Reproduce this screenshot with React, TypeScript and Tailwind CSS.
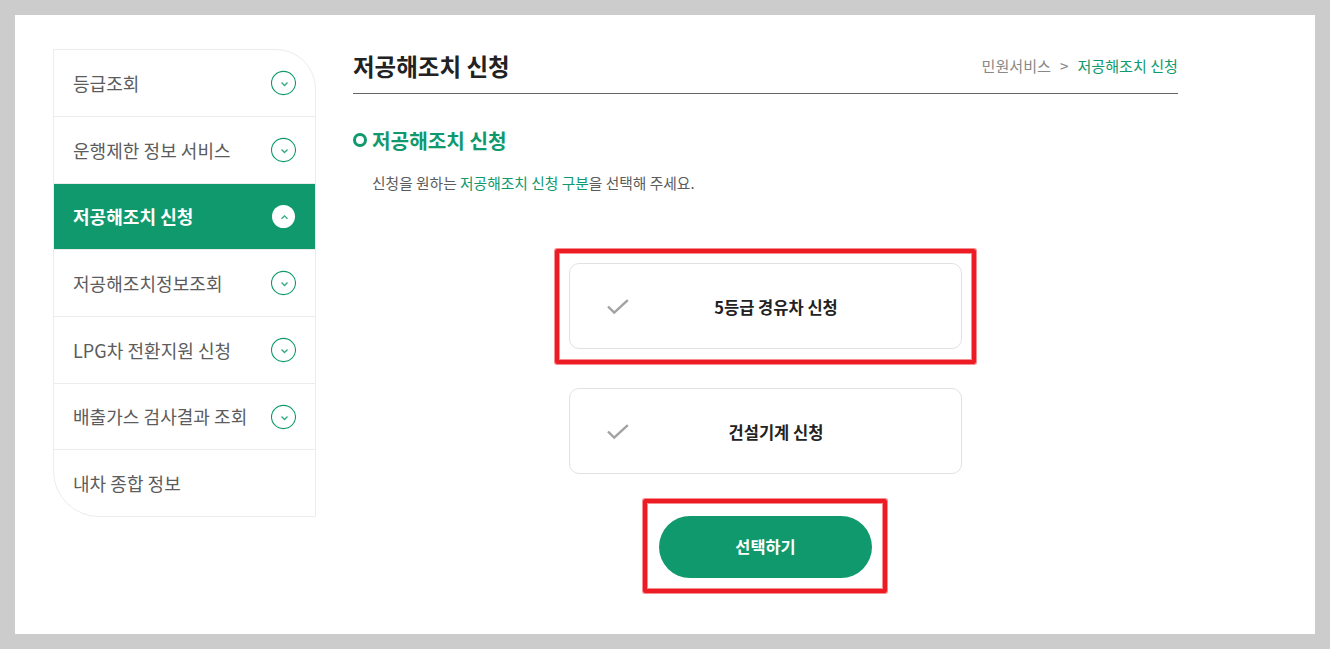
import { useState } from "react"

const menus = [
  { label: "등급조회", height: "h-[67px]", hasChildren: true },
  { label: "운행제한 정보 서비스", height: "h-[67px]", hasChildren: true },
  { label: "저공해조치 신청", height: "h-[66px]", hasChildren: true },
  { label: "저공해조치정보조회", height: "h-[67px]", hasChildren: true },
  { label: "LPG차 전환지원 신청", height: "h-[67px]", hasChildren: true },
  { label: "배출가스 검사결과 조회", height: "h-[66px]", hasChildren: true },
  { label: "내차 종합 정보", height: "h-[66px]", hasChildren: false }
]

const activeMenu = "저공해조치 신청"

function ToggleIcon({ open }: { open: boolean }) {
  return (
    <svg width="26" height="26" viewBox="0 0 26 26" fill="none" className="shrink-0">
      {open
        ? <circle cx="13.5" cy="12.5" r="11.5" fill="#fff" />
        : <ellipse cx="13.5" cy="13" rx="12" ry="11.6" stroke="#0f996d" strokeWidth="1.1" />
      }
      <path
        d={open ? "M11.5 14.8 L14.5 11.8 L17.5 14.8" : "M11.5 12.5 L14.5 15.5 L17.5 12.5"}
        stroke="#0f996d"
        strokeOpacity="0.85"
        strokeWidth="1.3"
      />
    </svg>
  )
}

function SideMenu() {
  return (
    <nav className="w-[263px] h-[468px] shrink-0 overflow-hidden rounded-tr-[40px] rounded-bl-[46px] border border-[#ececec]">
      <ul>
        {menus.map((menu, i) => {
          const active = menu.label === activeMenu
          return (
            <li
              key={menu.label}
              className={`${menu.height} flex items-center justify-between pl-[19px] pr-[19px] text-[18px] tracking-[0.05px] ${
                i < menus.length - 1 ? "border-b border-[#ececec]" : ""
              } ${active ? "bg-[#0f996d] font-bold text-white" : "text-[#5c5c5c]"}`}
            >
              <span className="whitespace-nowrap">{menu.label}</span>
              {menu.hasChildren && <ToggleIcon open={active} />}
            </li>
          )
        })}
      </ul>
    </nav>
  )
}

// red marker frame with a soft 1px edge on both sides
function Marker({ className }: { className: string }) {
  return (
    <div
      className={`pointer-events-none absolute rounded-[2px] border-4 border-[#ed1c24] shadow-[0_0_0_1px_rgba(237,28,36,0.5),inset_0_0_0_1px_rgba(237,28,36,0.5)] ${className}`}
    />
  )
}

interface OptionCardProps {
  label: string
  highlighted?: boolean
  onClick: () => void
}

function OptionCard({ label, highlighted, onClick }: OptionCardProps) {
  return (
    <div className="relative">
      <button
        onClick={onClick}
        className="flex h-[86px] w-[393px] items-center rounded-[10px] border border-[#e2e2e2] bg-white pl-[37px] pr-[38px]"
      >
        <svg width="22" height="16" viewBox="0 0 22 16" fill="none" className="mt-[2px] shrink-0">
          <path d="M1 7.5 L7.2 13.7 L20.8 1.2" stroke="#a2a2a2" strokeWidth="2.4" />
        </svg>
        <span className="flex-1 pt-[3px] text-center text-[16.5px] font-bold text-[#222]">{label}</span>
      </button>
      {highlighted && <Marker className="-top-[14px] -left-[14px] h-[115px] w-[421px]" />}
    </div>
  )
}

export default function App() {
  const [, setSelected] = useState("")

  return (
    <div className="h-[649px] w-[1330px] border-[15px] border-[#ccc] bg-white font-['Noto_Sans_CJK_KR',sans-serif]">
      <div className="flex pl-[38px] pt-[34px]">
        <SideMenu />

        <main className="ml-[37px] w-[825px]">
          <header className="flex h-[45px] items-center justify-between border-b border-[#666] pb-[9px]">
            <h1 className="text-[23.5px] font-bold text-[#222]">저공해조치 신청</h1>
            <div className="flex pb-[3px] text-[15.1px] text-[#888]">
              <span>민원서비스</span>
              <span className="mx-[9px]">&gt;</span>
              <span className="text-[#0f996d]">저공해조치 신청</span>
            </div>
          </header>

          <section className="pt-[32px]">
            <h2 className="flex h-[30px] items-center text-[20.2px] font-bold text-[#0f996d]">
              <span className="mr-[5px] mb-[2px] h-[14px] w-[14px] rounded-full border-3 border-[#0f996d]" />
              저공해조치 신청
            </h2>
            <p className="mt-[16px] h-[22px] pl-[19px] text-[14.75px] leading-[22px] text-[#5c5c5c]">
              신청을 원하는 <span className="text-[#0f996d]">저공해조치 신청 구분</span>을 선택해 주세요.
            </p>
          </section>

          <div className="mt-[69px] flex flex-col items-center gap-[39px]">
            <OptionCard label="5등급 경유차 신청" highlighted onClick={() => setSelected("diesel")} />
            <OptionCard label="건설기계 신청" onClick={() => setSelected("machine")} />
          </div>

          <div className="mt-[42px] flex justify-center">
            <div className="relative">
              <button className="h-[62px] w-[213px] rounded-full bg-[#0f996d] pb-px text-[16.4px] font-bold text-white">
                선택하기
              </button>
              <Marker className="-top-[17px] -left-[16px] h-[94px] w-[244px]" />
            </div>
          </div>
        </main>
      </div>
    </div>
  )
}
